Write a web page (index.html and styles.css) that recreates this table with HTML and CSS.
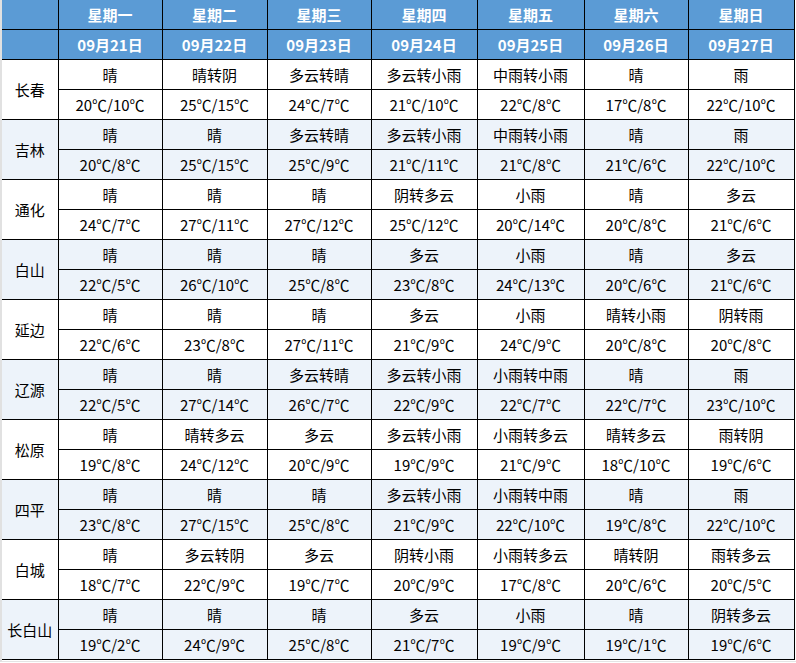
FILE: index.html
```html
<!DOCTYPE html>
<html lang="zh-CN">
<head>
<meta charset="utf-8">
<title>吉林省一周天气预报</title>
<link rel="stylesheet" href="styles.css">
</head>
<body>
<div class="sheet">
<table class="weather">
<colgroup>
<col class="c-city"><col class="c1"><col class="c2"><col class="c3"><col class="c4"><col class="c5"><col class="c6"><col class="c7">
</colgroup>
<thead>
<tr><th></th><th>星期一</th><th>星期二</th><th>星期三</th><th>星期四</th><th>星期五</th><th>星期六</th><th>星期日</th></tr>
<tr><th></th><th>09月21日</th><th>09月22日</th><th>09月23日</th><th>09月24日</th><th>09月25日</th><th>09月26日</th><th>09月27日</th></tr>
</thead>
<tbody>
<tr><td class="city" rowspan="2">长春</td><td>晴</td><td>晴转阴</td><td>多云转晴</td><td>多云转小雨</td><td>中雨转小雨</td><td>晴</td><td>雨</td></tr>
<tr><td>20℃/10℃</td><td>25℃/15℃</td><td>24℃/7℃</td><td>21℃/10℃</td><td>22℃/8℃</td><td>17℃/8℃</td><td>22℃/10℃</td></tr>
<tr class="alt"><td class="city" rowspan="2">吉林</td><td>晴</td><td>晴</td><td>多云转晴</td><td>多云转小雨</td><td>中雨转小雨</td><td>晴</td><td>雨</td></tr>
<tr class="alt"><td>20℃/8℃</td><td>25℃/15℃</td><td>25℃/9℃</td><td>21℃/11℃</td><td>21℃/8℃</td><td>21℃/6℃</td><td>22℃/10℃</td></tr>
<tr><td class="city" rowspan="2">通化</td><td>晴</td><td>晴</td><td>晴</td><td>阴转多云</td><td>小雨</td><td>晴</td><td>多云</td></tr>
<tr><td>24℃/7℃</td><td>27℃/11℃</td><td>27℃/12℃</td><td>25℃/12℃</td><td>20℃/14℃</td><td>20℃/8℃</td><td>21℃/6℃</td></tr>
<tr class="alt"><td class="city" rowspan="2">白山</td><td>晴</td><td>晴</td><td>晴</td><td>多云</td><td>小雨</td><td>晴</td><td>多云</td></tr>
<tr class="alt"><td>22℃/5℃</td><td>26℃/10℃</td><td>25℃/8℃</td><td>23℃/8℃</td><td>24℃/13℃</td><td>20℃/6℃</td><td>21℃/6℃</td></tr>
<tr><td class="city" rowspan="2">延边</td><td>晴</td><td>晴</td><td>晴</td><td>多云</td><td>小雨</td><td>晴转小雨</td><td>阴转雨</td></tr>
<tr><td>22℃/6℃</td><td>23℃/8℃</td><td>27℃/11℃</td><td>21℃/9℃</td><td>24℃/9℃</td><td>20℃/8℃</td><td>20℃/8℃</td></tr>
<tr class="alt"><td class="city" rowspan="2">辽源</td><td>晴</td><td>晴</td><td>多云转晴</td><td>多云转小雨</td><td>小雨转中雨</td><td>晴</td><td>雨</td></tr>
<tr class="alt"><td>22℃/5℃</td><td>27℃/14℃</td><td>26℃/7℃</td><td>22℃/9℃</td><td>22℃/7℃</td><td>22℃/7℃</td><td>23℃/10℃</td></tr>
<tr><td class="city" rowspan="2">松原</td><td>晴</td><td>晴转多云</td><td>多云</td><td>多云转小雨</td><td>小雨转多云</td><td>晴转多云</td><td>雨转阴</td></tr>
<tr><td>19℃/8℃</td><td>24℃/12℃</td><td>20℃/9℃</td><td>19℃/9℃</td><td>21℃/9℃</td><td>18℃/10℃</td><td>19℃/6℃</td></tr>
<tr class="alt"><td class="city" rowspan="2">四平</td><td>晴</td><td>晴</td><td>晴</td><td>多云转小雨</td><td>小雨转中雨</td><td>晴</td><td>雨</td></tr>
<tr class="alt"><td>23℃/8℃</td><td>27℃/15℃</td><td>25℃/8℃</td><td>21℃/9℃</td><td>22℃/10℃</td><td>19℃/8℃</td><td>22℃/10℃</td></tr>
<tr><td class="city" rowspan="2">白城</td><td>晴</td><td>多云转阴</td><td>多云</td><td>阴转小雨</td><td>小雨转多云</td><td>晴转阴</td><td>雨转多云</td></tr>
<tr><td>18℃/7℃</td><td>22℃/9℃</td><td>19℃/7℃</td><td>20℃/9℃</td><td>17℃/8℃</td><td>20℃/6℃</td><td>20℃/5℃</td></tr>
<tr class="alt"><td class="city" rowspan="2">长白山</td><td>晴</td><td>晴</td><td>晴</td><td>多云</td><td>小雨</td><td>晴</td><td>阴转多云</td></tr>
<tr class="alt"><td>19℃/2℃</td><td>24℃/9℃</td><td>25℃/8℃</td><td>21℃/7℃</td><td>19℃/9℃</td><td>19℃/1℃</td><td>19℃/6℃</td></tr>
</tbody>
</table>
</div>
</body>
</html>
```

FILE: styles.css
```css
html, body {
  margin: 0;
  padding: 0;
  background: #ffffff;
}

.sheet {
  border-left: 2px solid #e1e1e1;
  width: 794px;
  padding-bottom: 1px;
  border-bottom: 1px solid #e4e4e4;
}

.weather {
  border-collapse: collapse;
  table-layout: fixed;
  width: 792px;
  font-family: "Noto Sans CJK SC", "Microsoft YaHei", sans-serif;
  font-size: 15px;
  color: #000000;
}

.c-city { width: 56px; }
.c1 { width: 104px; }
.c2 { width: 105px; }
.c3 { width: 104px; }
.c4 { width: 106px; }
.c5 { width: 107px; }
.c6 { width: 104px; }
.c7 { width: 106px; }

.weather th,
.weather td {
  height: 29px;
  padding: 0;
  text-align: center;
  vertical-align: middle;
  border: 1px solid #000000;
  line-height: 20px;
  white-space: nowrap;
}

.weather tr > :first-child {
  border-left: none;
}

.weather thead tr:first-child th {
  border-top: none;
}

.weather th {
  background: #5b9bd5;
  color: #ffffff;
  font-weight: bold;
}

.weather tr.alt td {
  background: #edf3fa;
}
```
